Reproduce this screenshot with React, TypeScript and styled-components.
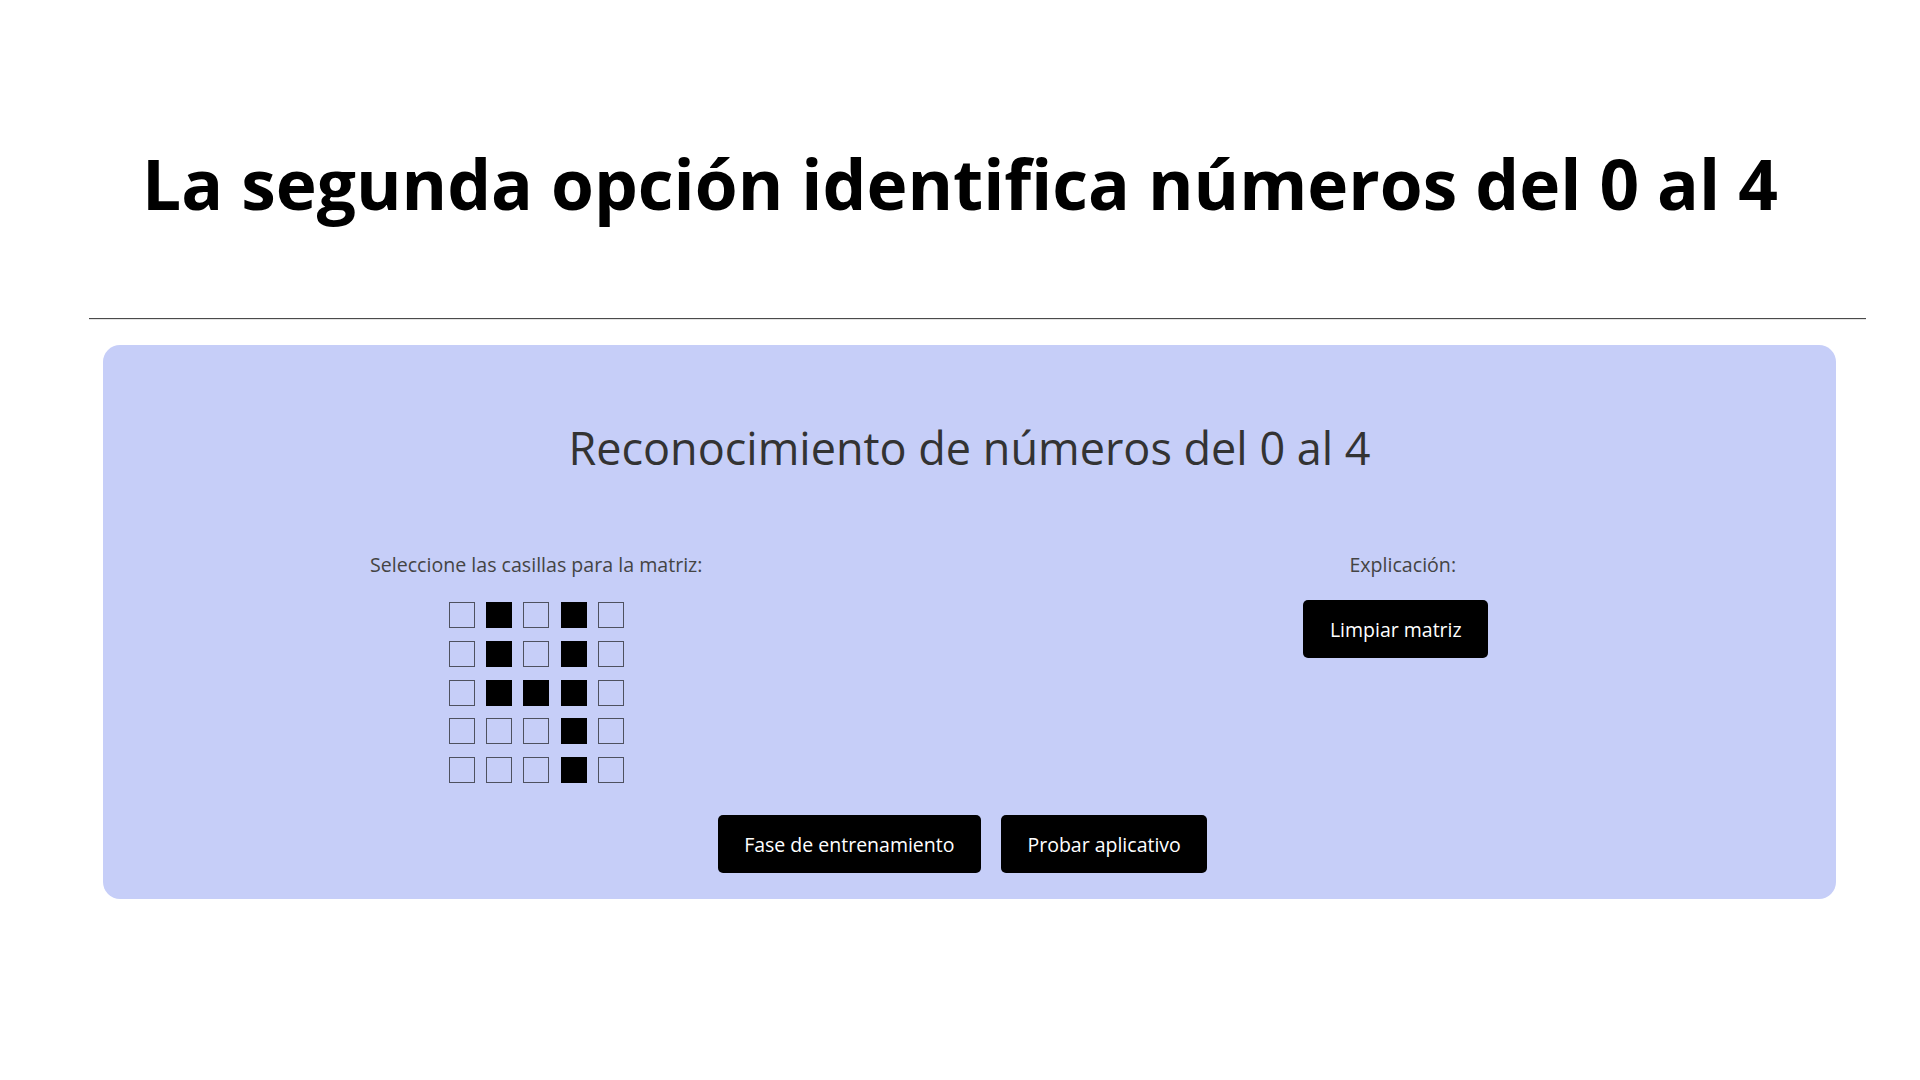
import React, { useState } from 'react';
import styled, { createGlobalStyle } from 'styled-components';

const GlobalStyle = createGlobalStyle`
  html, body {
    margin: 0;
    padding: 0;
    background: #ffffff;
  }
  body {
    font-family: 'Open Sans', 'Noto Sans', sans-serif;
  }
`;

const Page = styled.div`
  width: 1920px;
  padding-top: 136px;
  padding-bottom: 120px;
`;

const Title = styled.h1`
  margin: 0;
  font-family: 'Open Sans', sans-serif;
  font-weight: 700;
  font-size: 69.4px;
  line-height: normal;
  color: #000;
  text-align: center;
`;

const Divider = styled.hr`
  margin: 88px 0 0 89px;
  width: 1777px;
  height: 0;
  border: none;
  border-top: 1px solid #4a4a4a;
  border-bottom: 1px solid #e4e4e4;
`;

const Panel = styled.section`
  margin: 25px 0 0 103px;
  width: 1733px;
  box-sizing: border-box;
  background: #c6cef8;
  border-radius: 17px;
  padding: 72px 0 26px;
`;

const Subtitle = styled.h2`
  margin: 0;
  font-family: 'Open Sans', sans-serif;
  font-weight: 400;
  font-size: 45px;
  line-height: normal;
  color: #333;
  text-align: center;
`;

const Columns = styled.div`
  display: grid;
  grid-template-columns: 1fr 1fr;
  margin-top: 73px;
`;

const Column = styled.div`
  display: flex;
  flex-direction: column;
  align-items: center;
`;

const Label = styled.div`
  font-size: 19.6px;
  line-height: normal;
  color: #444;
`;

const Matrix = styled.div`
  display: grid;
  grid-template-columns: repeat(5, 26px);
  column-gap: 11.25px;
  row-gap: 12.8px;
  margin-top: 24px;
`;

const Cell = styled.div<{ $on: boolean }>`
  width: 26px;
  height: 26px;
  box-sizing: border-box;
  border: 1.5px solid ${props => (props.$on ? '#000' : '#4e5160')};
  background: ${props => (props.$on ? '#000' : 'transparent')};
  cursor: pointer;
`;

const Button = styled.button`
  font-family: 'Open Sans', sans-serif;
  font-size: 19.5px;
  line-height: normal;
  color: #fff;
  background: #000;
  border: none;
  border-radius: 5px;
  padding: 15.5px 26.5px;
  cursor: pointer;
`;

const ClearButton = styled(Button)`
  margin-top: 22px;
  margin-right: 14px;
`;

const Actions = styled.div`
  display: flex;
  justify-content: center;
  gap: 20px;
  margin-top: 32px;
  padding-right: 14px;
`;

const initial = [
  [0, 1, 0, 1, 0],
  [0, 1, 0, 1, 0],
  [0, 1, 1, 1, 0],
  [0, 0, 0, 1, 0],
  [0, 0, 0, 1, 0],
];

export default function App() {
  const [cells, setCells] = useState<number[]>(initial.flat());

  const toggle = (i: number) => {
    setCells(prev => prev.map((v, j) => (j === i ? 1 - v : v)));
  };

  return (
    <>
      <GlobalStyle />
      <Page>
        <Title>La segunda opción identifica números del 0 al 4</Title>
        <Divider />
        <Panel>
          <Subtitle>Reconocimiento de números del 0 al 4</Subtitle>
          <Columns>
            <Column>
              <Label>Seleccione las casillas para la matriz:</Label>
              <Matrix>
                {cells.map((v, i) => (
                  <Cell key={i} $on={v === 1} onClick={() => toggle(i)} />
                ))}
              </Matrix>
            </Column>
            <Column>
              <Label>Explicación:</Label>
              <ClearButton onClick={() => setCells(cells.map(() => 0))}>
                Limpiar matriz
              </ClearButton>
            </Column>
          </Columns>
          <Actions>
            <Button>Fase de entrenamiento</Button>
            <Button>Probar aplicativo</Button>
          </Actions>
        </Panel>
      </Page>
    </>
  );
}
